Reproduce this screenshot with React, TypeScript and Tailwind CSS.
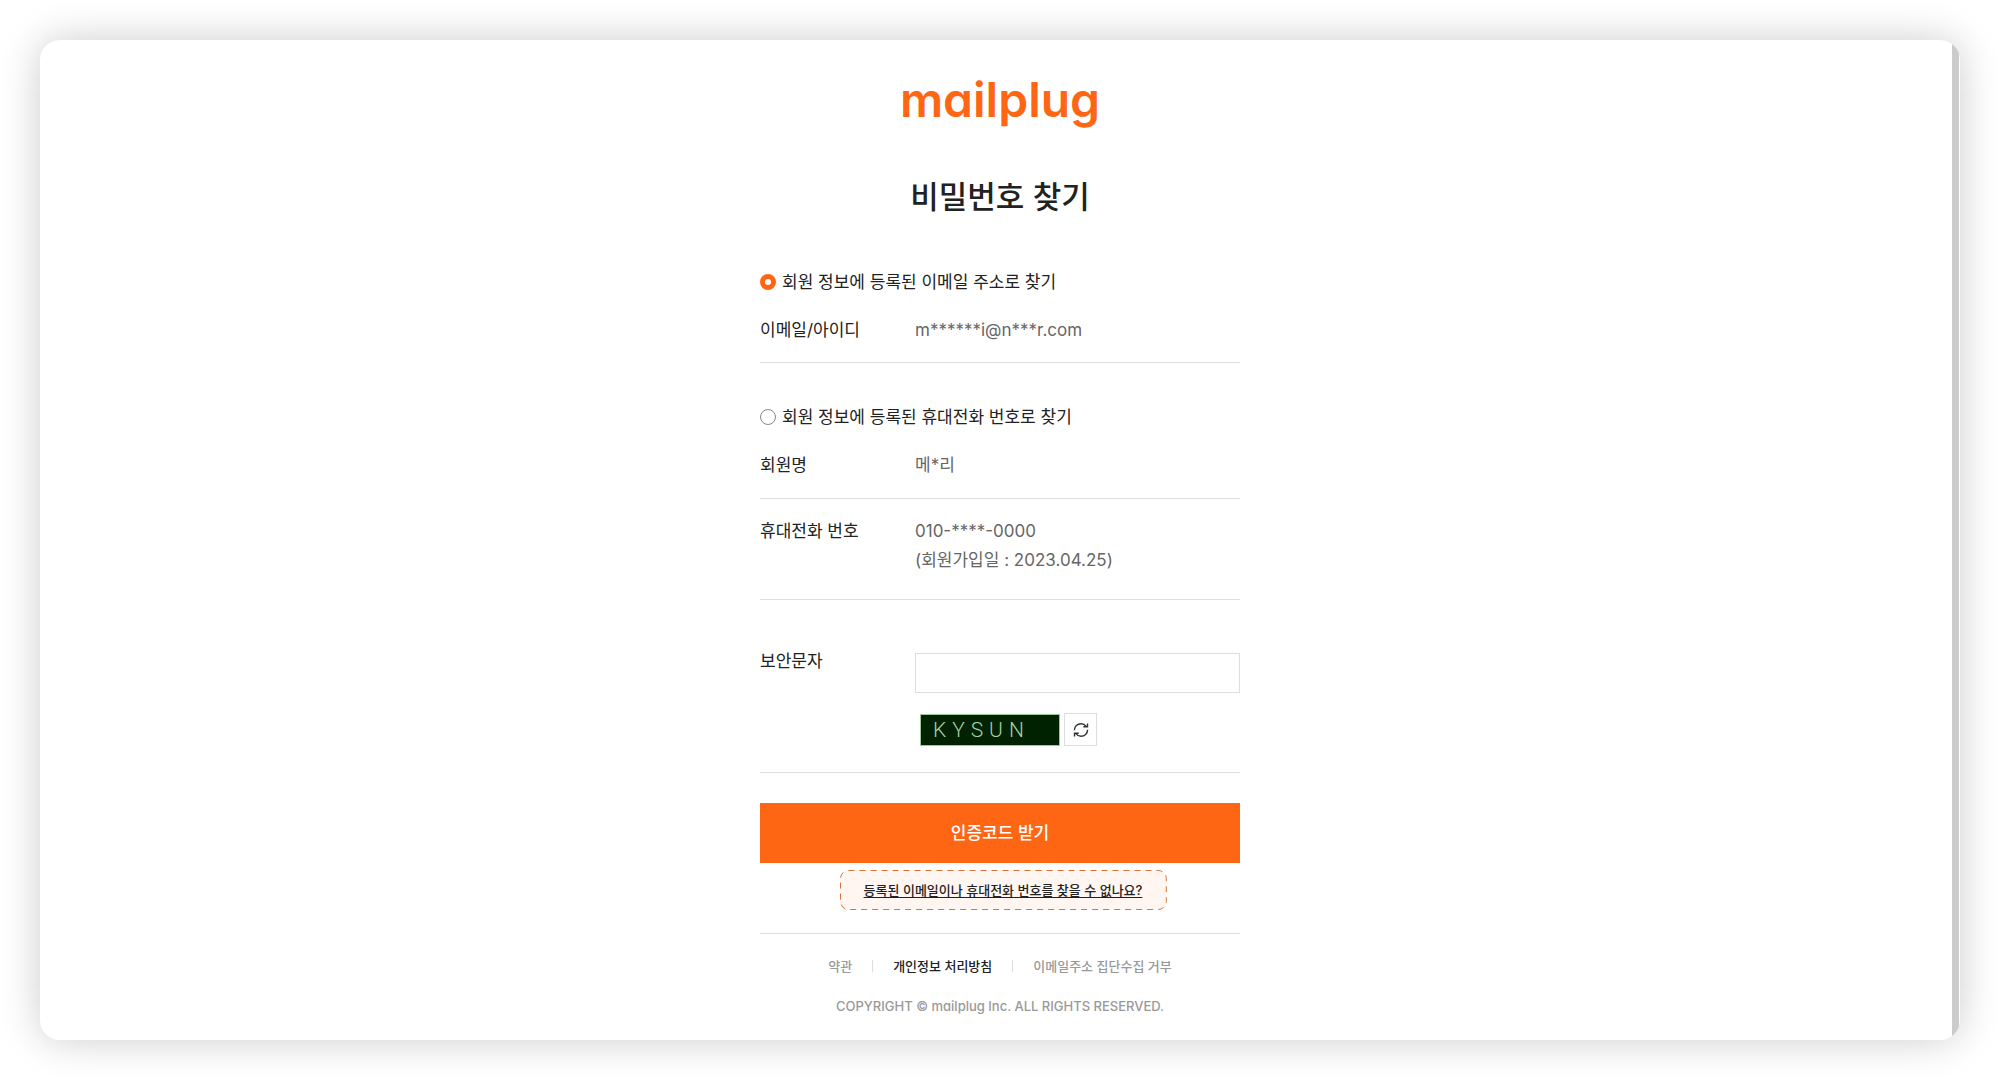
import type { ReactNode } from "react";

function Row({ label, children }: { label: string; children: ReactNode }) {
  return (
    <div className="flex border-b border-[#dddddd]">
      <dt className="w-[155px] shrink-0 text-[#222222]">{label}</dt>
      <dd className="flex-1 text-[#666666]">{children}</dd>
    </div>
  );
}

function MethodOption({ id, label, defaultChecked }: { id: string; label: string; defaultChecked?: boolean }) {
  return (
    <div className="flex h-7 items-center gap-[6px]">
      <input
        id={id}
        type="radio"
        name="method"
        defaultChecked={defaultChecked}
        className="size-4 appearance-none rounded-full border border-[#888888] bg-white checked:border-[5px] checked:border-[#ff6613]"
      />
      <label htmlFor={id}>{label}</label>
    </div>
  );
}

function RefreshIcon() {
  return (
    <svg aria-hidden="true" width="16" height="16" viewBox="0 0 16 16" fill="none" stroke="#333333" strokeWidth="1.4">
      <path d="M1.4 8.2C1.4 4.400 4.400 1.800 8 1.800c2.200 0 4 .9 5.200 2.500" />
      <path d="M14.600 7.800C14.600 11.600 11.600 14.200 8 14.200c-2.200 0-4-.9-5.200-2.500" />
      <path d="M14.500 1.400v3.400h-4.200" />
      <path d="M1.500 14.600v-3.400h4.200" />
    </svg>
  );
}

export default function App() {
  return (
    <div className="flex min-h-screen bg-white p-10 font-['Inter','Noto_Sans_CJK_KR',sans-serif] text-[17px] leading-7 text-[#222222]">
      <div className="flex flex-1 overflow-hidden rounded-[20px] bg-white shadow-[0_0_40px_rgba(0,0,0,0.2)]">
        <main className="flex flex-1 flex-col items-center pl-2">
          <a
            href="#"
            aria-label="mailplug"
            className="mt-7 h-16 text-[48px] leading-[64px] font-semibold text-[#ff6613] [font-feature-settings:'cv11']"
          >
            mailplug
          </a>
          <h1 className="mt-10 text-[31px] leading-[50px] font-medium">비밀번호 찾기</h1>

          <form className="mt-[46px] w-full max-w-[480px]" onSubmit={(e) => e.preventDefault()}>
            <MethodOption id="by-email" label="회원 정보에 등록된 이메일 주소로 찾기" defaultChecked />
            <dl className="[&>div]:pt-5 [&>div]:pb-[18px]">
              <Row label="이메일/아이디">m******i@n***r.com</Row>
            </dl>

            <div className="mt-10">
              <MethodOption id="by-phone" label="회원 정보에 등록된 휴대전화 번호로 찾기" />
            </div>
            <dl className="pt-[2px] [&>div]:pt-[18px] [&>div]:pb-[19px]">
              <Row label="회원명">메*리</Row>
              <Row label="휴대전화 번호">
                <p>010-****-0000</p>
                <p className="pt-px pb-[6px]">(회원가입일 : 2023.04.25)</p>
              </Row>
            </dl>

            <div className="mt-[53px] flex border-b border-[#dddddd] pb-[26px]">
              <label htmlFor="captcha" className="-mt-[6px] w-[155px] shrink-0">
                보안문자
              </label>
              <div className="flex-1">
                <input id="captcha" type="text" className="block h-10 w-full border border-[#dddddd] px-3 outline-none" />
                <div className="mt-5 ml-[5px] flex items-end gap-1">
                  <div className="flex h-8 w-[140px] items-center border border-[#9cc89c] bg-[#002200] pl-3 font-['Roboto',sans-serif] text-[21px] leading-8 font-light tracking-[6px] text-[#a8cfa8]">
                    KYSUN
                  </div>
                  <button
                    type="button"
                    aria-label="새로고침"
                    className="flex size-[33px] items-center justify-center border border-[#dddddd] bg-white"
                  >
                    <RefreshIcon />
                  </button>
                </div>
              </div>
            </div>

            <button type="submit" className="mt-[30px] block h-[60px] w-full bg-[#ff6613] text-[17px] font-medium text-white">
              인증코드 받기
            </button>
          </form>

          <div className="mt-[7px] flex w-full max-w-[480px] justify-center border-b border-[#dddddd] pb-[23px]">
            <a
              href="#"
              className="relative ml-[6px] flex h-10 items-center rounded-lg bg-[#fff6f2] px-6 text-[13px] font-medium text-[#222222] underline underline-offset-2"
            >
              <svg aria-hidden="true" className="absolute inset-0 size-full overflow-visible" fill="none">
                <rect x="0.5" y="0.5" width="99.7%" height="39" rx="8" stroke="#d9733c" strokeDasharray="6 5" />
              </svg>
              등록된 이메일이나 휴대전화 번호를 찾을 수 없나요?
            </a>
          </div>

          <footer className="mt-5 flex flex-col items-center gap-4 text-[13px] leading-6 font-medium text-[#999999]">
            <nav className="flex items-center gap-5">
              <a href="#">약관</a>
              <span className="h-3 w-px bg-[#dddddd]" />
              <a href="#" className="text-[#222222]">개인정보 처리방침</a>
              <span className="h-3 w-px bg-[#dddddd]" />
              <a href="#">이메일주소 집단수집 거부</a>
            </nav>
            <p className="[font-feature-settings:'cv11']">COPYRIGHT © mailplug Inc. ALL RIGHTS RESERVED.</p>
          </footer>
        </main>
        <div className="mr-px w-[7px] bg-[#cbcbcb]" />
      </div>
    </div>
  );
}
